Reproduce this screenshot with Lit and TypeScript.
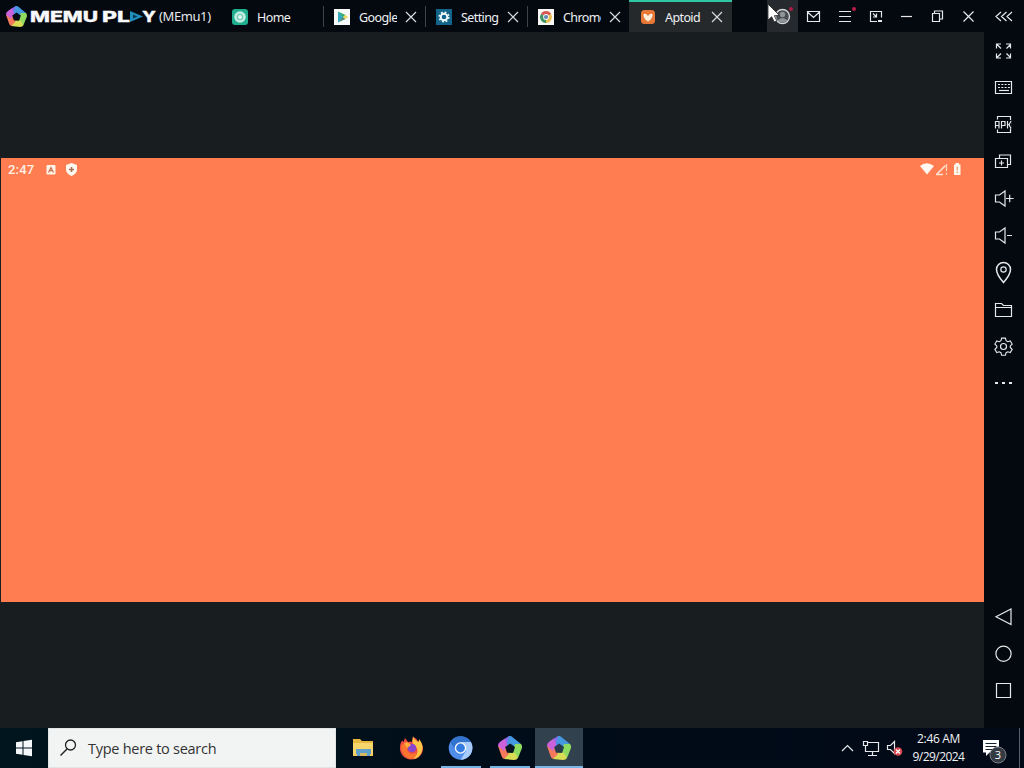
import { LitElement, html, svg, css, type TemplateResult } from "lit";
import { customElement, property } from "lit/decorators.js";

const icon = (w: number, h: number, body: TemplateResult) =>
  html`<svg width=${w} height=${h} viewBox="0 0 ${w} ${h}">${body}</svg>`;

const iconCss = css`
  svg { display: block; flex: none; }
  .line { fill: none; stroke: #e6e8ea; stroke-width: 1.2; }
`;

/* Five-sided rainbow ring, drawn in a 24 unit box. */
const pentagon = (hole: string) => svg`
  <path d="M11 0 2 6 8 13 15 8Z" fill="#8a6cf0"/>
  <path d="M11 0Q13-.5 15 1.5L23 8 17 13 9 8Z" fill="#4398df"/>
  <path d="M23 8Q24.5 9.500 24 12L20 22 14 18 17 8Z" fill="#8edb60"/>
  <path d="M20 22Q19 24 16 24L6 23 9 16 17 17Z" fill="#d9dc55"/>
  <path d="M6 23Q4 22 3.500 20L0 10 7 10 11 18Z" fill="#f5795b"/>
  <path d="M0 10Q0 7 2 6L7 2.500 9 9 6 15Z" fill="#cb62d9"/>
  <path d="M12.200 7.500 17 11 15.200 16.800H9L7.200 11Z" fill=${hole}/>`;

const tabIcons: Record<string, TemplateResult> = {
  home: icon(16, 16, svg`<rect width="16" height="16" rx="3" fill="#1fae8e"/>
    <circle cx="8" cy="8" r="5.800" fill="#c4ece1"/><circle cx="8" cy="8" r="2.600" fill="#e2f5f0" stroke="#72cbb6" stroke-width="1.200"/>`),
  play: icon(16, 16, svg`<rect width="16" height="16" fill="#f7faf9"/>
    <path d="M4 2.500v11l6-5.500Z" fill="#35a8c5"/><path d="M4 2.500l5 5.500 2.500-2Z" fill="#35ae6b"/><path d="M4 13.500l5-5.500 2.500 2Z" fill="#528f80"/><path d="M9 8l2.200-2 3 2-3 2Z" fill="#e9d65a"/>`),
  settings: icon(16, 16, svg`<rect width="16" height="16" fill="#12648a"/>
    <circle cx="8" cy="8" r="3.300" fill="none" stroke="#f0f8fb" stroke-width="1.900"/>
    <circle cx="8" cy="8" r="4.800" fill="none" stroke="#f0f8fb" stroke-width="1.600" stroke-dasharray="1.880 1.890"/>`),
  chrome: icon(16, 16, svg`<rect width="16" height="16" fill="#f8f8f6"/>
    <path d="M8 8 2.800 5A6 6 0 0 1 13.200 5Z" fill="#d95852"/>
    <path d="M8 8 13.200 5A6 6 0 0 1 8 14Z" fill="#e9c153"/>
    <path d="M8 8V14A6 6 0 0 1 2.800 5Z" fill="#3b9461"/>
    <circle cx="8" cy="8" r="2.900" fill="#f8f8f6"/><circle cx="8" cy="8" r="2.100" fill="#6289b7"/>`),
  aptoide: icon(16, 16, svg`<rect x="1" y="1" width="14" height="14" rx="3.500" fill="#e87838"/>
    <path d="M3.500 5Q6 4 8 7Q10 4 12.500 5Q13 10 8 12.500Q3 10 3.500 5Z" fill="#fff0dc"/>`),
};

@customElement("memu-tab")
class MemuTab extends LitElement {
  @property() label = "";
  @property() kind = "home";
  @property({ type: Boolean }) closable = false;
  @property({ type: Boolean, reflect: true }) active = false;

  static styles = [iconCss, css`
    :host { display: flex; align-items: center; width: 102px; height: 32px; box-sizing: border-box; padding: 1px 0 0 10px; background: linear-gradient(#3f4449, #3f4449) right 6px / 1px 21px no-repeat; }
    :host([active]) { width: 103px; background: #26292c; border-top: 2px solid #2fc6a3; padding-top: 0; padding-left: 11px; margin-left: -1px; }
    .label { margin-left: 9px; padding-top: 2px; width: 38px; overflow: hidden; white-space: nowrap; color: #eef0f2; font: 12.5px/20px "Noto Sans", sans-serif; letter-spacing: -0.6px; }
    .x { margin-left: 8px; }
    .x .line { stroke: #d9dcde; stroke-width: 1.2; }
  `];

  render() {
    return html`${tabIcons[this.kind]}
      <span class="label">${this.label}</span>
      ${this.closable ? html`<span class="x">${icon(12, 12, svg`<path class="line" d="M1 1 11 11M11 1 1 11"/>`)}</span>` : ""}`;
  }
}

const controls: TemplateResult[] = [
  svg`<path class="line" d="M9.500 11.500h12v10h-12ZM9.500 12l6 5.500 6-5.500"/>`,
  svg`<path class="line" d="M10 11.500h12M10 16.500h12M10 21.500h12"/><circle cx="25" cy="9" r="2" fill="#bb1c48"/>`,
  svg`<path class="line" d="M17 21.500H10.500v-10h11v6M13 13.500l3.500 3.500M16.500 13.500v3.500H13"/><path d="M18 20h4v2h-4z" fill="#e6e8ea"/>`,
  svg`<path class="line" d="M10 16.500h11"/>`,
  svg`<path class="line" d="M10.500 13.500h7v8h-7ZM12.500 13v-2h8v8h-3"/>`,
  svg`<path class="line" d="M10.500 11.500 20.500 21.500M20.500 11.500 10.500 21.500"/>`,
];

/* Each side tool is drawn in a 40 by 37 cell, centred on 20,19. */
const tools: TemplateResult[] = [
  svg`<path class="line" d="M12.500 16.500v-4.500h4.500M13 12.500l4 4M22 12h4.500v4.500M26.500 12.500l-4 4M12.500 21.500V26H17M13 25.500l4-4M22 26h4.500v-4.500M26.500 25.500l-4-4"/>`,
  svg`<path class="line" d="M11.500 12.500h16v12h-16Z"/><path class="line" d="M14 15.500h12M14 18.500h12" stroke-dasharray="2 1.300"/><path class="line" d="M15 21.500h10"/>`,
  svg`<g stroke-width="1"><path class="line" d="M13.500 13.500v-3h13v16h-13v-3"/><path d="M10 14h17v8.500h-17z" fill="#04080f"/><path class="line" d="M11.500 22.500v-7h3.500v7M11.500 19.500h3.500M17.500 22.500v-7h3.500v4h-3.500M23.500 15v7.500M23.500 18.700h1.500l2-3.700M25 18.700l2 3.800"/></g>`,
  svg`<path class="line" d="M11.500 15.500h12v9h-12ZM15.500 15v-3h11v9.500h-3M17.500 17.500v5M15 20h5"/>`,
  svg`<path class="line" d="M11.500 15h4l5.500-4v15l-5.500-4h-4ZM22 18.500h7.500M25.700 14.700v7.500"/>`,
  svg`<path class="line" d="M11.500 15h4l5.500-4v15l-5.500-4h-4ZM23 18.500h5"/>`,
  svg`<path class="line" style="stroke-width:1.500" d="M19.500 28.500Q12.500 20.500 12.500 15.500a7 7 0 0 1 14 0Q26.500 20.500 19.500 28.500Z"/><circle class="line" cx="19.500" cy="15.500" r="2.700"/>`,
  svg`<path class="line" d="M11.500 25.500v-13h6l2 2h8v11ZM11.500 16.500h16"/>`,
  svg`<path class="line" d="M17.500 10.500h4l.7 2.700 1.800 1 2.600-.8 2 3.300-2 2v1.600l2 2-2 3.300-2.600-.8-1.800 1-.7 2.700h-4l-.7-2.700-1.800-1-2.600.8-2-3.300 2-2v-1.600l-2-2 2-3.300 2.600.8 1.800-1Z" transform="translate(1 .2) scale(.95)"/><circle class="line" cx="19.500" cy="18.500" r="3"/>`,
  svg`<path d="M11 17h3v2h-3zM18 17h3v2h-3zM25 17h3v2h-3z" fill="#e6e8ea"/>`,
];
const navs: TemplateResult[] = [
  svg`<path class="line" d="M27 11v15.500L12 18.700Z"/>`,
  svg`<circle class="line" cx="19.500" cy="18.700" r="7.600"/>`,
  svg`<path class="line" d="M12.500 11.500h14v14h-14Z"/>`,
];

@customElement("memu-taskbar")
class MemuTaskbar extends LitElement {
  static styles = [iconCss, css`
    :host { display: flex; height: 40px; background: linear-gradient(90deg, #00151e, #010b18 65%, #020917); }
    .start { width: 48px; }
    .search { width: 288px; box-sizing: border-box; display: flex; align-items: center; padding-left: 10px; background: #f2f3f3; border: 1px solid #dfe4e6; color: #333; font: 14.5px/22px "Open Sans", sans-serif; }
    .search span { margin-left: 9px; padding-top: 2px; letter-spacing: -0.27px; white-space: nowrap; }
    .apps { display: flex; padding-left: 2px; }
    .app { width: 49px; box-sizing: border-box; padding: 8px 0 0 12px; height: 40px; }
    .open { background: linear-gradient(#74b5e5, #74b5e5) 5px 38px / 40px 2px no-repeat; }
    .memu { padding-left: 13px; }
    .current { background: linear-gradient(#79b7e4, #79b7e4) 0 38px / 48px 2px no-repeat, #31414d; width: 48px; margin-left: 1px; }
    .tray { margin-left: auto; display: flex; }
    .clock { width: 66px; text-align: center; color: #f0f2f4; font: 12px/18px "Open Sans", sans-serif; letter-spacing: -0.35px; padding: 2px 0 0 1px; box-sizing: border-box; white-space: nowrap; }
    .date { letter-spacing: -0.55px; }
  `];

  render() {
    return html`
      <div class="start">${icon(48, 40, svg`<path d="M16 14.200l6.500-1v6.300H16ZM23.500 13l8.500-1.200v7.700h-8.500ZM16 20.500h6.500v6.300l-6.500-1ZM23.500 20.500H32v7.700l-8.500-1.200Z" fill="#f5f8fa"/>`)}</div>
      <div class="search">
        ${icon(20, 20, svg`<circle cx="11.500" cy="7" r="5" fill="none" stroke="#222" stroke-width="1.300"/><path d="M8 11 1.500 17.500" stroke="#222" stroke-width="1.400"/>`)}
        <span>Type here to search</span>
      </div>
      <div class="apps">
        <div class="app">${icon(25, 25, svg`<path d="M3 3h7l2 2h11v15H3Z" fill="#e8b740"/><path d="M3 7h20v11H3Z" fill="#f6d56c"/><path d="M6 13h15v7H6Z" fill="#5f9fc9"/><path d="M3 18h4v2H3zM20 18h3v2h-3z" fill="#f3ca55"/><path d="M10 17h7v3h-7z" fill="#d9b862"/>`)}</div>
        <div class="app">${icon(25, 25, svg`
          <path d="M1 12Q1 7 3 4.500L4.500 6 6 2 9 6Q12 5 13 6L14 1Q18 2 19 6L20 4Q24 8 24 13A11.500 11 0 0 1 1 12Z" fill="#f24b43"/>
          <path d="M14 0Q15 4 20 6L20 3Q25 9 23 15Q21 22 14 23Q20 18 18 12Q12 10 14 0Z" fill="#ffc545"/>
          <path d="M2 10Q4 7 8 8L10 11Q7 13 9 16Q13 20 18 16Q17 22 11 23Q3 21 2 10Z" fill="#fa762f"/>
          <circle cx="13" cy="12" r="4.300" fill="#8b46cf"/><path d="M5 7Q9 5 12 9L8 12Z" fill="#ffad3d"/>`)}</div>
        <div class="app open">${icon(25, 25, svg`<circle cx="12.500" cy="12" r="11.800" fill="#4f8de8"/>
          <path d="M12.500 6H23A12 12 0 0 1 12.500 23.800L18 15Z" fill="#a8ccfa"/>
          <path d="M2.500 6A12 12 0 0 1 23 6H12.500L7 14Z" fill="#3273ce"/>
          <circle cx="12.500" cy="12" r="5.800" fill="#f1f6fc"/><circle cx="12.500" cy="12" r="4.400" fill="#337be0"/>`)}</div>
        <div class="app open memu">${icon(25, 25, pentagon("#051421"))}</div>
        <div class="app current">${icon(25, 25, pentagon("#263b4b"))}</div>
      </div>
      <div class="tray">
        ${icon(72, 40, svg`<g transform="translate(3 0)"><path class="line" d="M6 23l5.500-5.500L17 23"/>
          <path class="line" d="M31.500 14.500h11v9h-13v-4M36.500 24v3M32 27.500h9M27.500 13.500h4v4h-4ZM29.500 17.500v5"/>
          <path class="line" d="M51.500 17.500h3l4-4v12l-4-4h-3Z"/>
          <circle cx="62" cy="23.500" r="4.300" fill="#d94850"/><path d="M60 21.500l4 4M64 21.500l-4 4" stroke="#fff" stroke-width="1.300"/></g>`)}
        <div class="clock">2:46 AM<br /><span class="date">9/29/2024</span></div>
        <svg width="53" height="40" viewBox="0 0 53 40">
          <path d="M12 12h16v12.500H18.500L15 28v-3.500h-3Z" fill="#fff"/><path d="M14.500 15.500h11M14.500 18.500h11M14.500 21.500h8" stroke="#17222d"/>
          <circle cx="27" cy="27" r="8" fill="#343b42" stroke="#787e83"/>
          <text x="27" y="31" text-anchor="middle" fill="#fff" font-family="Open Sans, sans-serif" font-size="11">3</text>
          <path d="M48.500 0v40" stroke="#56616a"/>
        </svg>
      </div>`;
  }
}

@customElement("app-root")
class AppRoot extends LitElement {
  static styles = [iconCss, css`
    :host { display: grid; grid-template-rows: 32px 696px 40px; width: 1024px; height: 768px; overflow: hidden; background: #050910; position: relative; }
    .top { display: flex; background: #04080f; }
    .brand { display: flex; width: 222px; }
    .name { color: #e5e7e9; font: 13px/20px "Noto Sans", sans-serif; padding-top: 6px; white-space: nowrap; letter-spacing: -0.4px; }
    .controls { display: flex; margin-left: auto; }
    .hover { background: #26292d; }
    .middle { display: flex; }
    .screen { width: 984px; box-sizing: border-box; padding: 126px 0 0 1px; background: #181d20; }
    .phone { height: 444px; background: #ff7d50; }
    .status { display: flex; justify-content: space-between; height: 24px; }
    .left { display: flex; }
    .time { width: 40px; padding-left: 7px; box-sizing: border-box; color: #fff0e6; font: 500 13px/23px Roboto, sans-serif; letter-spacing: 0.2px; }
    .side { width: 40px; box-sizing: border-box; display: flex; flex-direction: column; padding-bottom: 19px; background: #04080f; }
    .nav { margin-top: auto; }
    .cursor { position: absolute; left: 767px; top: 3px; }
  `];

  render() {
    return html`
      <header class="top">
        <div class="brand">
          <svg width="159" height="32" viewBox="0 0 159 32">
            <g transform="translate(6 6) scale(.87)">${pentagon("#080c16")}</g>
            <g fill="#f8f9fa" stroke="#f8f9fa" stroke-width=".3" font-family="Inter, sans-serif" font-weight="800" font-size="14.800">
              <text x="30" y="22" textLength="68" lengthAdjust="spacingAndGlyphs">MEMU</text>
              <text x="102" y="22" textLength="28" lengthAdjust="spacingAndGlyphs">PL</text>
              <text x="142" y="22" textLength="14" lengthAdjust="spacingAndGlyphs">Y</text>
            </g>
            <path d="M130 11l13 5.500-13 5.500Z" fill="#1f8fc0"/><path d="M133 14.500l4.500 2-4.500 2Z" fill="#0c354c"/>
          </svg>
          <span class="name">(MEmu1)</span>
        </div>
        <memu-tab label="Home" kind="home"></memu-tab>
        <memu-tab label="Google" kind="play" closable></memu-tab>
        <memu-tab label="Settings" kind="settings" closable></memu-tab>
        <memu-tab label="Chrome" kind="chrome" closable></memu-tab>
        <memu-tab label="Aptoid" kind="aptoide" closable active></memu-tab>
        <div class="controls">
          <div class="hover">${icon(31, 32, svg`<circle cx="15.500" cy="16.500" r="7" fill="#4a4e52" stroke="#d5d8da" stroke-width="1.400"/>
            <circle cx="15.500" cy="14.500" r="2.700" fill="#8f9497"/><path d="M10.500 20.500Q15.500 15.500 20.500 20.500Q15.500 24.500 10.500 20.500Z" fill="#8f9497"/><circle cx="24" cy="9" r="2" fill="#aa1d46"/>`)}</div>
          ${controls.map((c) => icon(31, 32, c))}
          ${icon(40, 32, svg`<path class="line" d="M17 12l-5 4.500 5 4.500M22.500 12l-5 4.500 5 4.500M28 12l-5 4.500 5 4.500"/>`)}
        </div>
      </header>
      <main class="middle">
        <div class="screen">
          <div class="phone">
            <div class="status">
              <div class="left">
                <span class="time">2:47</span>
                ${icon(40, 24, svg`<rect x="5.500" y="7" width="9" height="9.500" rx="1.200" fill="#fff3e8"/><path d="M7.500 14.500l2.500-5 2.500 5M8.500 12.700h3" fill="none" stroke="#c56f50" stroke-width="1.200"/>
                  <path d="M30.500 5l5.500 2v4.500Q36 15.500 30.500 18Q25 15.500 25 11.500V7Z" fill="#fff8ee"/><path d="M30.500 9v5M28 11.500h5" stroke="#a4705e" stroke-width="1.500"/>`)}
              </div>
              ${icon(64, 24, svg`<path d="M0 8Q6.500 2.500 14 8L7 16.500Z" fill="#fff8f0"/>
                <path d="M16.500 16.500 25.500 7.500M16 16.500h7" stroke="#ffe1d0" stroke-width="1.600"/><path d="M26.500 6v7M26.500 14.700v2" stroke="#ffd8c2" stroke-width="1.200"/>
                <path d="M34 6.500h1.500V5h3.500v1.500h1.500V17H34Z" fill="#fff8ed"/><path d="M37.200 8.500v4M37.200 13.500v1.500" stroke="#dd8560"/>`)}
            </div>
          </div>
        </div>
        <aside class="side">
          ${tools.map((t) => icon(40, 37, t))}
          <div class="nav">${navs.map((n) => icon(40, 37, n))}</div>
        </aside>
      </main>
      <memu-taskbar></memu-taskbar>
      <div class="cursor">${icon(14, 21, svg`<path d="M1 1v16l3.700-3.300L7.200 19l2.600-1.200-2.400-5.100 5-.3Z" fill="#fff" stroke="#222" stroke-width=".8"/>`)}</div>`;
  }
}
